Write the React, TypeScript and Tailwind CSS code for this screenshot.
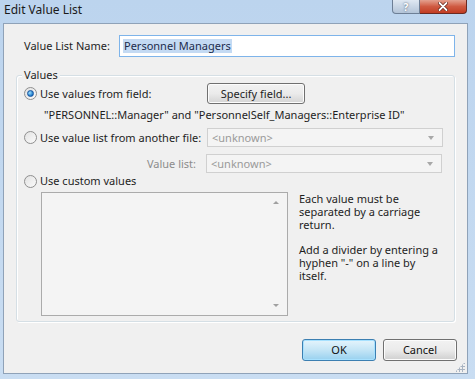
import React from "react";

const Radio = ({ checked }: { checked?: boolean }) => (
  <span className="w-[13px] h-[13px] rounded-full border border-[#8f8f8f] bg-gradient-to-br from-[#e2e2e2] to-[#fbfbfb] flex items-center justify-center shrink-0">
    {checked && (
      <span className="w-[7px] h-[7px] rounded-full bg-[radial-gradient(circle_at_35%_35%,#9fe0ff,#1b78c8_70%)] border border-[#16539e]" />
    )}
  </span>
);

const Combo = () => (
  <div className="w-[236px] h-[19px] border border-[#d0d0d0] bg-[#f4f4f4] flex items-center justify-between pl-[4px] pr-[8px] text-[#9a9a9a]">
    <span>&lt;unknown&gt;</span>
    <span className="w-0 h-0 border-l-[3px] border-r-[3px] border-t-[4px] border-l-transparent border-r-transparent border-t-[#a8a8a8]" />
  </div>
);

const Button = ({ label, primary }: { label: string; primary?: boolean }) => (
  <div
    className={
      "w-[74px] h-[22px] rounded-[3px] flex items-center justify-center text-[#111] " +
      (primary
        ? "border border-[#3c7fb1] bg-gradient-to-b from-[#e5f4fc] via-[#c4e5f6] to-[#98d1ef] shadow-[inset_0_0_0_1px_#a7e1ff]"
        : "border border-[#707070] bg-gradient-to-b from-[#f2f2f2] via-[#ebebeb] to-[#cfcfcf] shadow-[inset_0_0_0_1px_#fcfcfc]")
    }
  >
    {label}
  </div>
);

const Line = ({ children }: { children: React.ReactNode }) => (
  <div className="h-[13px] leading-[13px]">{children}</div>
);

export default function App() {
  return (
    <div className="w-[475px] h-[379px] overflow-hidden bg-gradient-to-b from-[#bcd4ee] to-[#c9ddf2] font-['Noto_Sans',sans-serif] text-[11px] leading-[14px] whitespace-nowrap text-[#1e1e1e] flex flex-col">
      {/* title bar */}
      <div className="h-[23px] flex items-start justify-between shrink-0">
        <div className="pl-[4px] pt-[2px] text-[12px] leading-[16px] text-[#1a1a1a]">Edit Value List</div>
        <div className="flex mr-[8px]">
          <div className="w-[28px] h-[14px] rounded-bl-[4px] border border-t-0 border-[#6d7f96] bg-gradient-to-b from-[#dfe8f2] to-[#b3c4d8] flex items-center justify-center text-[10px] leading-[10px] font-bold text-white [text-shadow:0_0_2px_#3a4a5e]">
            ?
          </div>
          <div className="w-[47px] h-[14px] rounded-br-[4px] border border-t-0 border-l-0 border-[#6a2a22] bg-gradient-to-b from-[#e3a08f] via-[#cf5a42] to-[#c23c22] flex items-center justify-center">
            <svg width="10" height="9" viewBox="0 0 10 9">
              <path d="M1.5 1 L8.5 8 M8.5 1 L1.5 8" stroke="#5a1a10" strokeWidth="3.2" strokeLinecap="round" />
              <path d="M1.5 1 L8.5 8 M8.5 1 L1.5 8" stroke="#fff" strokeWidth="1.8" strokeLinecap="round" />
            </svg>
          </div>
        </div>
      </div>

      {/* client area */}
      <div className="ml-[3px] w-[465px] h-[351px] border border-[#8fa2b8] bg-[#f0f0f0] flex flex-col">
        <div className="flex items-center mt-[11px] h-[22px]">
          <span className="ml-[20px] w-[95px]">Value List Name:</span>
          <div className="w-[336px] h-[22px] border border-[#7eb4ea] bg-white flex items-center pl-[3px]">
            <span className="bg-[#c4daf3] text-[#1c2c4c] px-[1px] h-[14px] flex items-center">Personnel Managers</span>
          </div>
        </div>

        {/* group box */}
        <div className="ml-[12px] mt-[18px] w-[439px] h-[247px] rounded-[3px] border border-[#d5dfe5] shadow-[inset_1px_1px_0_#fff,1px_1px_0_#fff] flex flex-col">
          <div className="-mt-[8px] ml-[5px] px-[2px] bg-[#f0f0f0] self-start h-[14px] flex items-center">Values</div>

          <div className="flex items-center h-[21px] mt-[1px]">
            <span className="ml-[7px]"><Radio checked /></span>
            <span className="ml-[3px] w-[167px]">Use values from field:</span>
            <div className="w-[98px] h-[21px] rounded-[3px] border border-[#707070] bg-gradient-to-b from-[#f2f2f2] via-[#ebebeb] to-[#d4d4d4] shadow-[inset_0_0_0_1px_#fcfcfc] flex items-center justify-center">
              Specify field...
            </div>
          </div>

          <div className="ml-[27px] mt-[4px] h-[14px] flex items-center">
            "PERSONNEL::Manager" and "PersonnelSelf_Managers::Enterprise ID"
          </div>

          <div className="flex items-center h-[19px] mt-[6px]">
            <span className="ml-[7px]"><Radio /></span>
            <span className="ml-[3px] w-[167px]">Use value list from another file:</span>
            <Combo />
          </div>

          <div className="flex items-center h-[19px] mt-[7px]">
            <span className="w-[180px] text-right text-[#8c8c8c] pr-[1px]">Value list:</span>
            <span className="ml-[9px]"><Combo /></span>
          </div>

          <div className="flex items-center h-[14px] mt-[1px]">
            <span className="ml-[7px]"><Radio /></span>
            <span className="ml-[3px]">Use custom values</span>
          </div>

          <div className="flex mt-[4px]">
            <div className="ml-[24px] w-[247px] h-[124px] border border-[#ababab] bg-[#f4f4f4] flex flex-col items-end justify-between py-[8px] pr-[8px]">
              <span className="w-0 h-0 border-l-[3px] border-r-[3px] border-b-[3px] border-l-transparent border-r-transparent border-b-[#a0a0a0]" />
              <span className="w-0 h-0 border-l-[3px] border-r-[3px] border-t-[3px] border-l-transparent border-r-transparent border-t-[#a0a0a0]" />
            </div>
            <div className="ml-[11px] flex flex-col">
              <Line>Each value must be</Line>
              <Line>separated by a carriage</Line>
              <Line>return.</Line>
              <div className="h-[12px]" />
              <Line>Add a divider by entering a</Line>
              <Line>hyphen "-" on a line by</Line>
              <Line>itself.</Line>
            </div>
          </div>
        </div>

        <div className="flex justify-end gap-[7px] mt-[17px] mr-[10px]">
          <Button label="OK" primary />
          <Button label="Cancel" />
        </div>
        <div className="flex justify-end mr-[2px] mt-[1px]">
          <div className="w-[10px] h-[10px] bg-[radial-gradient(circle,#a9b4c2_1px,transparent_1.2px)] bg-[length:3px_3px] [clip-path:polygon(100%_0,100%_100%,0_100%)]" />
        </div>
      </div>
    </div>
  );
}
